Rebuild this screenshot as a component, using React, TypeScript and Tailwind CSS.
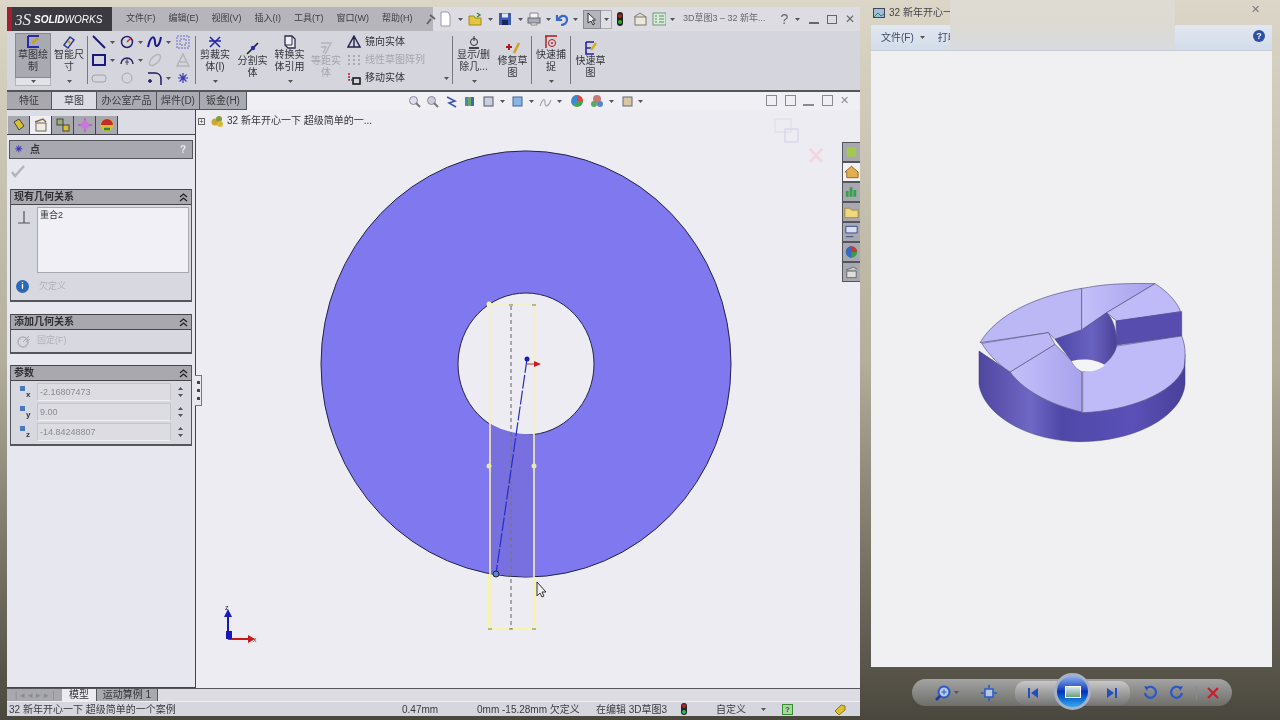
import type { ReactNode } from 'react';

const cjk = "font-['Liberation_Sans','Noto_Sans_CJK_SC',sans-serif]";

function Ico({ w = 16, h = 16, className = '', children }: { w?: number; h?: number; className?: string; children: ReactNode }) {
  return (
    <svg width={w} height={h} viewBox={`0 0 ${w} ${h}`} className={`shrink-0 ${className}`} fill="none">
      {children}
    </svg>
  );
}

function Caret({ className = '' }: { className?: string }) {
  return (
    <svg width="5" height="3" viewBox="0 0 5 3" className={`shrink-0 ${className}`}>
      <path d="M0 0h5L2.5 3z" fill="#555" />
    </svg>
  );
}

function Sep() {
  return <div className="w-px self-stretch my-[3px] bg-[#77777e] shrink-0" />;
}

function BigBtn({ w, label, icon, arrow, muted, pressed, low }: { w: number; label: ReactNode; icon: ReactNode; arrow?: boolean; muted?: boolean; pressed?: boolean; low?: boolean }) {
  return (
    <div
      style={{ width: w }}
      className={`relative shrink-0 flex flex-col items-center text-[10px] leading-[12px] text-center ${low ? 'pt-[7px]' : 'pt-[1px]'} ${muted ? 'text-[#a5a5ab]' : 'text-[#33333a]'}`}
    >
      {pressed && <div className="absolute inset-x-0 top-0 h-[45px] bg-[#a9a9b1] border border-[#8a8a92]" />}
      {pressed && <div className="absolute inset-x-0 top-[45px] bottom-[1px] bg-[#e2e2e8] border-x border-b border-[#b4b4ba]" />}
      <div className="relative h-[15px] flex items-center justify-center">{icon}</div>
      <div className="relative">{label}</div>
      {arrow && <Caret className="absolute bottom-[4px] left-1/2 -ml-[2px]" />}
    </div>
  );
}

function SmallTool({ children, arrow }: { children: ReactNode; arrow?: boolean }) {
  return (
    <div className="w-[28px] flex items-center gap-[3px]">
      {children}
      {arrow && <Caret />}
    </div>
  );
}

const sketchTools: { key: string; arrow?: boolean; icon: ReactNode }[] = [
  { key: 'line', arrow: true, icon: <path d="M2 2l12 12" stroke="#1a1a6e" strokeWidth="2" /> },
  { key: 'circle', arrow: true, icon: <g stroke="#22226e" strokeWidth="1.5"><circle cx="8" cy="8" r="5.5" /><path d="M8 8l4-4" stroke="#c03030" /></g> },
  { key: 'spline', arrow: true, icon: <path d="M1 13C4 0 8 2 8 8s4 6 6-5" stroke="#1a1a8e" strokeWidth="2" /> },
  { key: 'pattern', icon: <g stroke="#6a6ac8" strokeDasharray="2 1"><rect x="2" y="2" width="12" height="12" /><path d="M5 5h6v6H5z" /></g> },
  { key: 'rect', arrow: true, icon: <rect x="2" y="3" width="12" height="10" stroke="#1a1a7e" strokeWidth="2" /> },
  { key: 'arc', arrow: true, icon: <g stroke="#22226e" strokeWidth="1.5"><path d="M2 12a6 6 0 0 1 12 0" /><path d="M8 7v6M6 10h4" stroke="#444" strokeWidth="1" /></g> },
  { key: 'ellipse', icon: <ellipse cx="8" cy="8" rx="7" ry="3.5" transform="rotate(-45 8 8)" stroke="#b4b4ba" strokeWidth="1.4" /> },
  { key: 'text', icon: <path d="M8 2l6 12H2zM5 10h6" stroke="#b4b4ba" strokeWidth="1.5" /> },
  { key: 'slot', icon: <rect x="1" y="5" width="14" height="7" rx="3" stroke="#a2a2a8" /> },
  { key: 'clock', icon: <circle cx="8" cy="8" r="5" stroke="#a8a8ae" /> },
  { key: 'fillet', arrow: true, icon: <path d="M1 3h7c4 0 6 3 6 6v6M3 9v4M1 11h4" stroke="#1a1a5e" strokeWidth="1.5" /> },
  { key: 'point', icon: <path d="M8 3v10M3 8h10M4.5 4.5l7 7M11.5 4.5l-7 7" stroke="#3a3ab8" strokeWidth="1.2" /> },
];

function CommandBar() {
  return (
    <div className={`h-[61px] bg-[#d5d5dd] flex items-stretch pl-[8px] pb-[3px] pt-[2px] border-b-2 border-[#55555c]`}>
      <BigBtn
        w={36}
        pressed
        arrow
        label={<>草图绘<br />制</>}
        icon={<Ico><path d="M3 2h11M3 2v11h11" stroke="#2a2ab0" strokeWidth="2" /><path d="M7 9l6-5" stroke="#c9a020" strokeWidth="2.5" /></Ico>}
      />
      <BigBtn
        w={36}
        arrow
        label={<>智能尺<br />寸</>}
        icon={<Ico><path d="M3 11l6-8 4 3-6 8z" stroke="#2a3a90" strokeWidth="1.5" /><circle cx="8" cy="8" r="1.5" fill="#c9a020" /></Ico>}
      />
      <Sep />
      <div className="w-[107px] grid grid-cols-[repeat(4,28px)] grid-rows-3 pl-[3px] items-center shrink-0">
        {sketchTools.map((t) => (
          <SmallTool key={t.key} arrow={t.arrow}>
            <Ico>{t.icon}</Ico>
          </SmallTool>
        ))}
      </div>
      <Sep />
      <BigBtn w={38} arrow label={<>剪裁实<br />体(I)</>} icon={<Ico><path d="M3 3l10 10M13 3L3 13M2 7h12" stroke="#2222a8" strokeWidth="1.5" /></Ico>} />
      <BigBtn w={37} low label={<>分割实<br />体</>} icon={<Ico><path d="M2 14L13 3" stroke="#222" strokeWidth="1.6" /><circle cx="8" cy="8" r="2.2" fill="#2a2ab0" /></Ico>} />
      <BigBtn w={37} arrow label={<>转换实<br />体引用</>} icon={<Ico><path d="M3 2h7l3 3v9H6l-3-3z" stroke="#2a2a4a" strokeWidth="1.3" fill="#f0f0f4" /><path d="M10 2v9H3" stroke="#2a2a4a" /></Ico>} />
      <BigBtn w={36} low muted label={<>等距实<br />体</>} icon={<Ico><path d="M3 3h10L7 14M3 7h5L5 13" stroke="#b4b4ba" strokeWidth="1.5" /></Ico>} />
      <div className="w-[108px] pl-[3px] flex flex-col justify-between text-[10px] leading-[18px] text-[#33333a] shrink-0">
        <div className="flex items-center gap-[4px]">
          <Ico w={14} h={14}><path d="M7 1l6 11H1zM7 1v11" stroke="#22224a" strokeWidth="1.4" /></Ico>
          镜向实体
        </div>
        <div className="flex items-center gap-[4px] text-[#a5a5ab]">
          <Ico w={14} h={14}><path d="M1 3h2M6 3h2M11 3h2M1 7h2M6 7h2M11 7h2M1 11h2M6 11h2M11 11h2" stroke="#aaa" strokeWidth="2" /></Ico>
          线性草图阵列
        </div>
        <div className="flex items-center gap-[4px]">
          <Ico w={14} h={14}><rect x="6" y="7" width="7" height="6" stroke="#111" strokeWidth="1.5" /><path d="M2 2v7h3" stroke="#b02020" strokeWidth="1.5" strokeDasharray="2 1" /></Ico>
          移动实体
        </div>
      </div>
      <Caret className="self-end -ml-[8px] mb-[7px] mr-[3px]" />
      <Sep />
      <BigBtn w={41} arrow label={<>显示/删<br />除几...</>} icon={<Ico><circle cx="8" cy="8" r="3.5" stroke="#333" /><path d="M3 14h10" stroke="#111" strokeWidth="1.5" /><path d="M8 2v5" stroke="#333" /></Ico>} />
      <BigBtn w={37} low label={<>修复草<br />图</>} icon={<Ico><path d="M1 7h6M4 4v6" stroke="#b01818" strokeWidth="2" /><path d="M9 13l5-10" stroke="#d0a020" strokeWidth="2.5" /></Ico>} />
      <Sep />
      <BigBtn w={38} arrow label={<>快速捕<br />捉</>} icon={<Ico><path d="M2 2h12M3 2v12" stroke="#b01818" strokeWidth="1.4" /><circle cx="9" cy="9" r="3.5" stroke="#b01818" /><circle cx="9" cy="9" r="1" fill="#b01818" /></Ico>} />
      <Sep />
      <BigBtn w={39} low label={<>快速草<br />图</>} icon={<Ico><path d="M3 2h8M3 2v12h8M3 8h5" stroke="#2222b0" strokeWidth="1.6" /><path d="M8 10l5-7" stroke="#d0b020" strokeWidth="2.5" /></Ico>} />
    </div>
  );
}

const menus = ['文件(F)', '编辑(E)', '视图(V)', '插入(I)', '工具(T)', '窗口(W)', '帮助(H)'];

function TitleBar() {
  return (
    <div className="h-[24px] flex items-stretch bg-[#dcdce2] text-[10px] text-[#44444a]">
      <div className="w-[105px] bg-[#3a3a40] flex items-center border-l-[5px] border-[#a02030] shrink-0">
        <span className="pl-[3px] text-[#e8e8ee] italic font-['Liberation_Serif',serif] text-[17px] leading-none">
          <span className="text-[15px]">3</span>S
        </span>
        <span className="pl-[3px] text-white italic text-[10px] font-bold">
          SOLID<span className="font-normal">WORKS</span>
        </span>
      </div>
      <div className="w-[321px] bg-[#b5b5bb] flex items-center pl-[14px] gap-[13px] shrink-0">
        {menus.map((m) => (
          <span key={m} className="whitespace-nowrap text-[9px] text-[#3e3e44]">{m}</span>
        ))}
        <Ico w={10} h={12}><path d="M1 11l4-5M4 2l5 4" stroke="#666" strokeWidth="2" /></Ico>
      </div>
      <div className="flex-1 flex items-center pl-[6px] min-w-0">
        <Ico w={13} h={16}><path d="M2 1h7l2 3v11H2z" fill="#fff" stroke="#99a" /></Ico>
        <Caret className="ml-[6px] mr-[5px]" />
        <Ico w={14} h={14}><path d="M1 4h5l1 2h6v7H1z" fill="#e2c640" stroke="#a08a20" /><path d="M9 1l3 2-3 2" stroke="#2a9030" strokeWidth="1.4" /></Ico>
        <Caret className="ml-[6px] mr-[5px]" />
        <Ico w={14} h={14}><rect x="1" y="1" width="12" height="12" fill="#3c5cb4" /><rect x="4" y="1.500" width="6" height="4" fill="#e4e8f4" /><rect x="4" y="8" width="6" height="5" fill="#16265c" /></Ico>
        <Caret className="ml-[6px] mr-[4px]" />
        <Ico w={14} h={14}><path d="M3 6V1h8v5" fill="#f4f4f4" stroke="#888" /><rect x="1" y="6" width="12" height="5" fill="#a8acb4" stroke="#667" /><path d="M4 11h6v2H4z" fill="#f4f4f4" stroke="#888" /></Ico>
        <Caret className="ml-[5px] mr-[4px]" />
        <Ico w={14} h={14}><path d="M2 3v5h5M3 8c3-6 9-5 9 0 0 3-3 5-6 5" stroke="#3868c8" strokeWidth="2.2" /></Ico>
        <Caret className="ml-[4px] mr-[5px]" />
        <div className="h-[19px] w-[18px] bg-[#b4b4bc] border border-[#8a8a92] flex items-center justify-center">
          <Ico w={10} h={14}><path d="M1 1v10l3-2 2 4 1.500-1-2-4h3z" fill="#f0f0f4" stroke="#333" /></Ico>
        </div>
        <div className="h-[19px] w-[11px] bg-[#dedee4] border-y border-r border-[#aaaab0] flex items-center justify-center mr-[4px]"><Caret /></div>
        <Ico w={8} h={16}><rect x="1" y="1" width="6" height="14" rx="3" fill="#222" /><circle cx="4" cy="5" r="2" fill="#b82020" /><circle cx="4" cy="11" r="2" fill="#30b030" /></Ico>
        <Ico w={14} h={14} className="ml-[9px]"><rect x="2" y="5" width="11" height="8" fill="#ece8dc" stroke="#7a7668" /><path d="M1 5l6-4 6 4" stroke="#8a7a5a" /></Ico>
        <Ico w={14} h={14} className="ml-[5px]"><rect x="1" y="1" width="13" height="12" fill="#d6ecd8" stroke="#6a9a7a" /><path d="M3 4h2M3 7h2M3 10h2M7 4h5M7 7h5M7 10h5" stroke="#5a8a6a" /></Ico>
        <Caret className="ml-[4px]" />
        <span className="ml-[8px] whitespace-nowrap text-[9px] text-[#66666c]">3D草图3 – 32 新年...</span>
        <span className="ml-[15px] text-[14px] leading-none text-[#66666c]">?</span>
        <Caret className="ml-[7px]" />
        <div className="ml-[9px] w-[10px] h-[9px] border-b-2 border-[#66666c]" />
        <div className="ml-[8px] w-[10px] h-[9px] border border-[#66666c]" />
        <span className="ml-[8px] text-[12px] leading-none text-[#66666c]">✕</span>
      </div>
    </div>
  );
}

const docTabs = [
  { label: '特征', w: 45, fill: 'bg-[#a8a8ae]' },
  { label: '草图', w: 45, fill: 'bg-[#dcdce4]' },
  { label: '办公室产品', w: 60, fill: 'bg-[#aaaab2]' },
  { label: '焊件(D)', w: 43, fill: 'bg-[#aaaab2]' },
  { label: '钣金(H)', w: 47, fill: 'bg-[#aaaab2]' },
];

function HudIcon({ fill, stroke }: { fill: string; stroke: string }) {
  return <Ico w={13} h={13}><rect x="2" y="2" width="9" height="9" fill={fill} stroke={stroke} /></Ico>;
}

function TabsRow() {
  return (
    <div className="h-[18px] flex items-stretch bg-[#f0eff4] text-[10px] text-[#3a3a40]">
      {docTabs.map((t) => (
        <div key={t.label} style={{ width: t.w }} className={`${t.fill} shrink-0 flex items-center justify-center border-r border-b border-[#55555c]`}>
          {t.label}
        </div>
      ))}
      <div className="flex-1 flex items-center pl-[161px] relative">
        <Ico w={13} h={13} className="mr-[5px]"><circle cx="5.500" cy="5.500" r="4" stroke="#8a8a92" fill="#dde" /><path d="M8 8l4 4" stroke="#777" strokeWidth="2" /></Ico>
        <Ico w={13} h={13} className="mr-[6px]"><circle cx="5.500" cy="5.500" r="4" stroke="#8a8a92" fill="#ccd" /><path d="M8 8l4 4" stroke="#777" strokeWidth="2" /></Ico>
        <Ico w={13} h={13} className="mr-[5px]"><path d="M2 2l8 4-6 2 7 4" stroke="#3a5ab0" strokeWidth="1.6" /></Ico>
        <Ico w={13} h={13}><path d="M2 2h3v9H2z" fill="#4a8aa8" /><path d="M5 2h3v9H5z" fill="#6aa860" /><path d="M8 2h3v9H8z" fill="#3a6ab0" /></Ico>
        <div className="w-[6px]" />
        <HudIcon fill="#c8d0de" stroke="#556" />
        <Caret className="ml-[5px] mr-[6px]" />
        <HudIcon fill="#8ab4e8" stroke="#468" />
        <Caret className="ml-[5px] mr-[5px]" />
        <Ico w={13} h={13}><path d="M1 11c3-8 5-8 5-3s4 3 6-3" stroke="#a8a8b0" strokeWidth="1.2" /></Ico>
        <Caret className="ml-[5px] mr-[8px]" />
        <Ico w={14} h={14}><circle cx="7" cy="7" r="6" fill="#e8a838" /><path d="M7 7V1a6 6 0 0 1 6 6z" fill="#d84848" /><path d="M7 7h6a6 6 0 0 1-9 5z" fill="#3aa858" /><path d="M7 7L4 12a6 6 0 0 1 3-11z" fill="#3a88d8" /></Ico>
        <Ico w={14} h={14} className="ml-[6px]"><circle cx="7" cy="5" r="4" fill="#c87878" /><circle cx="4" cy="10" r="3" fill="#58a868" /><circle cx="10" cy="10" r="3" fill="#5888c8" /></Ico>
        <Caret className="ml-[5px] mr-[7px]" />
        <HudIcon fill="#d8c8a8" stroke="#667" />
        <Caret className="ml-[4px]" />
        <div className="absolute right-[9px] top-[3px] flex items-center gap-[7.5px]">
          <div className="w-[11px] h-[11px] border border-[#8a8a92]" />
          <div className="w-[11px] h-[11px] border border-[#8a8a92]" />
          <div className="w-[11px] h-[11px] border-b-2 border-[#8a8a92]" />
          <div className="w-[11px] h-[11px] border border-[#8a8a92]" />
          <span className="w-[11px] text-[11px] leading-[11px] text-[#8a8a92]">✕</span>
        </div>
      </div>
    </div>
  );
}

function SectionHead({ title }: { title: string }) {
  return (
    <div className="h-[16px] bg-[#a8a8ae] border-y border-[#44444a] flex items-center justify-between pl-[3px] pr-[3px] text-[10px] font-bold text-[#2e2e34] leading-none">
      {title}
      <Ico w={9} h={9}><path d="M1 4l3.500-3L8 4M1 8l3.500-3L8 8" stroke="#222" strokeWidth="1.300" /></Ico>
    </div>
  );
}

function Section({ title, className, children }: { title: string; className: string; children: ReactNode }) {
  return (
    <div className={`mx-[3px] border-x border-b-2 border-[#55555c] bg-[#d8d8e0] ${className}`}>
      <SectionHead title={title} />
      {children}
    </div>
  );
}

const params = [
  { axis: 'x', value: '-2.16807473' },
  { axis: 'y', value: '9.00' },
  { axis: 'z', value: '-14.84248807' },
];

const panelTabs = [
  <Ico key="a"><path d="M3 5l5-3 5 7-5 4z" fill="#d8c030" stroke="#444" /></Ico>,
  <Ico key="b"><rect x="3" y="6" width="10" height="8" fill="#f0ece0" stroke="#666" /><path d="M2 5l8-3 3 3" stroke="#8a6a3a" strokeWidth="1.5" /></Ico>,
  <Ico key="c"><rect x="2" y="2" width="6" height="6" fill="#9ab06a" stroke="#444" /><rect x="8" y="8" width="6" height="6" fill="#d8c030" stroke="#444" /></Ico>,
  <Ico key="d"><path d="M8 1v14M1 8h14" stroke="#c050d0" strokeWidth="1.4" /><circle cx="8" cy="8" r="4" fill="#c878d8" /></Ico>,
  <Ico key="e"><circle cx="8" cy="8" r="6.500" fill="#d8c030" /><path d="M2 8a6 6 0 0 1 12 0z" fill="#c82828" /><path d="M5 12h6" stroke="#2a8a3a" strokeWidth="2.5" /></Ico>,
];

function SidePanel() {
  return (
    <div className="w-[189px] shrink-0 bg-[#e7e7ef] border-r border-[#44444a] border-b border-b-[#44444a] relative z-10 text-[#33333a]">
      <div className="flex pl-[1px] pt-[6px] h-[25px] border-b border-[#44444a] bg-[#dcdce4]">
        {panelTabs.map((ico, i) => (
          <div key={i} className={`w-[22px] h-[18px] flex items-center justify-center border-r border-[#44444a] ${i === 1 ? 'bg-[#eeeef4]' : 'bg-[#a8a8b0]'}`}>
            {ico}
          </div>
        ))}
      </div>
      <div className="mx-[2px] mt-[5px] h-[19px] bg-[#a8a8b0] border border-[#55555c] flex items-center justify-between pl-[5px] pr-[6px] text-[10px] font-bold leading-none">
        <span className="flex items-center gap-[7px]">
          <span className="text-[#3a3ab0] text-[9px]">✳</span>点
        </span>
        <span className="text-[#e8e8ee]">?</span>
      </div>
      <div className="h-[30px] pl-[3px] pt-[4px]">
        <Ico><path d="M2 9l3 4 9-10" stroke="#b4b4bc" strokeWidth="2.5" /></Ico>
      </div>
      <Section title="现有几何关系" className="h-[113px]">
        <div className="flex h-[68px]">
          <div className="w-[26px] flex justify-center pt-[4px]">
            <Ico><path d="M8 2v12M2 14h12" stroke="#555" strokeWidth="1.2" /></Ico>
          </div>
          <div className="w-[152px] mt-[2px] h-[66px] bg-[#f0f0f6] border border-[#a8a8b0] px-[2px] text-[9px] leading-[14px]">重合2</div>
        </div>
        <div className="flex items-center h-[27px] pl-[5px] gap-[10px] text-[9px] text-[#b0b0b8]">
          <div className="w-[13px] h-[13px] rounded-full bg-[#2a68b8] text-white text-[9px] font-bold leading-[13px] text-center">i</div>
          欠定义
        </div>
      </Section>
      <Section title="添加几何关系" className="h-[40px] mt-[12px]">
        <div className="flex items-center h-[22px] pl-[6px] gap-[6px] text-[9px] text-[#b0b0b8]">
          <Ico w={14} h={14}><circle cx="6" cy="8" r="5" stroke="#b0b0b8" strokeWidth="1.5" /><path d="M6 8l6-6M9 8l4-3" stroke="#a8a8b0" /></Ico>
          固定(F)
        </div>
      </Section>
      <Section title="参数" className="h-[81px] mt-[11px]">
        <div className="flex flex-col gap-[2px] pt-[2px]">
          {params.map((p) => (
            <div key={p.axis} className="flex items-center h-[18px]">
              <div className="w-[26px] pl-[9px] relative h-full">
                <div className="w-[5px] h-[5px] bg-[#4a78c0] mt-[3px]" />
                <span className="absolute left-[15px] top-[7px] text-[8px] font-bold leading-[10px]">{p.axis}</span>
              </div>
              <div className="w-[134px] h-[18px] bg-[#dcdce2] border border-[#c4c4ca] border-b-[#f0f0f4] pl-[2px] text-[9px] leading-[16px] text-[#8a8a92]">{p.value}</div>
              <div className="w-[14px] ml-[1px] pl-[3px] flex flex-col gap-[4px] items-center">
                <Caret className="rotate-180" />
                <Caret />
              </div>
            </div>
          ))}
        </div>
      </Section>
      <div className="absolute left-[188px] top-[265px] w-[7px] h-[31px] bg-[#e9e9ef] border border-l-0 border-[#77777e] flex flex-col items-center justify-center gap-[5px]">
        <div className="w-[3px] h-[3px] bg-[#44444a]" />
        <div className="w-[3px] h-[3px] bg-[#44444a]" />
        <div className="w-[3px] h-[3px] bg-[#44444a]" />
      </div>
    </div>
  );
}

const taskIcons = [
  <rect key="a" x="4" y="4" width="10" height="10" fill="#a4c850" />,
  <path key="b" d="M2 9l7-6 7 6v6H4V9z" fill="#e0b050" stroke="#a06020" />,
  <path key="c" d="M3 14V8h3v6zm4 0V4h3v10zm4 0V7h3v7z" fill="#38a048" />,
  <path key="d" d="M2 5h5l2 2h7v8H2z" fill="#f0d880" stroke="#a08a40" />,
  <path key="e" d="M3 3h12v7H3zM3 14h8" stroke="#334488" fill="#dde" />,
  <g key="f"><circle cx="9" cy="9" r="6" fill="#38a048" /><path d="M3 9a6 6 0 0 1 12 0z" fill="#c83838" /><path d="M9 3a6 6 0 0 0 0 12z" fill="#3868c8" /></g>,
  <path key="g" d="M4 8h10v7H4zM3 7l8-3 4 2" stroke="#666" fill="#ddd" />,
];

function Drawing() {
  const ringPath =
    'M321 365a205 213 0 1 0 410 0a205 213 0 1 0 -410 0ZM458 365a68 71 0 1 1 136 0a68 71 0 1 1 -136 0Z';
  return (
    <svg className="absolute inset-0" width="664" height="575" viewBox="196 111 664 575">
      <path d={ringPath} fill="#7f78ef" fillRule="evenodd" stroke="#23234a" strokeWidth="1" />
      <path d="M490 425Q511 436 534 435.500V577.800Q511 577 490 574.700Z" fill="#7870de" />
      <path d="M490 305H534M490 305V630M534 305V630" stroke="#f3f2b8" strokeWidth="1.600" fill="none" />
      <path d="M489 575V630M535 578V630M489 630H535" stroke="#f5f4a8" strokeWidth="2.200" fill="none" />
      <path d="M511 307V630" stroke="#77777e" strokeWidth="1.200" strokeDasharray="4 3" />
      <path d="M527 360L496 575" stroke="#2a2acc" strokeWidth="1.200" strokeDasharray="14 2" />
      <path d="M527 365H534" stroke="#c83030" />
      <path d="M534 362l7 3-7 3z" fill="#d01818" />
      <circle cx="527" cy="360" r="2.500" fill="#1a1ab8" />
      <circle cx="496" cy="575" r="3" fill="#5a88d8" stroke="#223" />
      <circle cx="489" cy="305" r="2.500" fill="#f3f2c0" />
      <circle cx="489" cy="467" r="2.500" fill="#e8e8a8" />
      <circle cx="534" cy="467" r="2.500" fill="#e8e8a8" />
      <path d="M488 630h4M509 630h4M532 630h4M509 306h4M532 306h4" stroke="#777" />
      <path d="M537 583v14l3-3 2 4 2-1-2-4h4z" fill="#eeeef4" stroke="#333" />
      <path d="M228 640V616" stroke="#1818b8" strokeWidth="2" />
      <path d="M224 618l4-8 4 8z" fill="#1818c8" />
      <path d="M228 640h22" stroke="#c81818" strokeWidth="2" />
      <path d="M248 636l7 4-7 4z" fill="#c81818" />
      <path d="M226 632h6v8h-6z" fill="#1818b8" />
      <text x="225" y="611" fontSize="7" fill="#223">z</text>
      <text x="253" y="643" fontSize="7" fill="#a03030">x</text>
      <g stroke="#e3e0ea" strokeWidth="1.500" fill="none">
        <rect x="775" y="120" width="16" height="13" />
        <rect x="785" y="130" width="13" height="13" stroke="#dcd6ee" />
      </g>
      <path d="M810 150l12 13M822 150l-12 13" stroke="#f0d8de" strokeWidth="3" />
    </svg>
  );
}

function Viewport() {
  return (
    <div className="relative flex-1 bg-[#edecf2] overflow-hidden">
      <Drawing />
      <div className="absolute left-[2px] top-[4px] flex items-center text-[10px] leading-[14px] text-[#33333a]">
        <span className="w-[7px] h-[7px] border border-[#666] mr-[5px] flex items-center justify-center text-[7px] leading-none">+</span>
        <Ico w={14} h={14} className="mr-[3px]"><circle cx="5" cy="8" r="3.500" fill="#c8a830" /><circle cx="9" cy="5" r="3" fill="#889a40" /><circle cx="10" cy="10" r="3" fill="#d8b838" /></Ico>
        32 新年开心一下 超级简单的一...
      </div>
      <div className="absolute right-0 top-[32px] w-[18px] flex flex-col">
        {taskIcons.map((ico, i) => (
          <div key={i} className={`h-[20px] flex items-center justify-center border-y border-l border-[#55555c] ${i === 1 ? 'bg-[#f2f2f6]' : 'bg-[#a8a8b0]'}`}>
            <svg width="18" height="18" viewBox="0 0 18 18">{ico}</svg>
          </div>
        ))}
      </div>
    </div>
  );
}

function BottomBars() {
  return (
    <>
      <div className="h-[13px] flex items-stretch bg-[#dcdce2] text-[10px] text-[#33333a] leading-[12px] border-t border-[#55555c]">
        <div className="w-[55px] bg-[#a8a8ae] text-[#8a8a90] text-[9px] tracking-[3px] pl-[8px] overflow-hidden">|◂◂▸▸|</div>
        <div className="w-[35px] text-center bg-[#ecebf0] border-r border-[#55555c]">模型</div>
        <div className="w-[61px] text-center bg-[#a8a8ae] border-r border-[#55555c]">运动算例 1</div>
      </div>
      <div className="h-[15px] bg-[#d6d6de] border-t border-[#f0f0f4] flex items-center text-[10px] text-[#3a3a40] relative whitespace-nowrap pl-[2px]">
        <span className="w-[393px]">32 新年开心一下 超级简单的一个案例</span>
        <span className="w-[75px]">0.47mm</span>
        <span className="w-[119px]">0mm -15.28mm 欠定义</span>
        <span className="w-[84px]">在编辑 3D草图3</span>
        <Ico w={8} h={12} className="mr-[28px]"><rect x="1" y="0" width="6" height="12" rx="3" fill="#223" /><circle cx="4" cy="3" r="2" fill="#c02020" /><circle cx="4" cy="9" r="2" fill="#30c040" /></Ico>
        <span className="w-[45px]">自定义</span>
        <Caret className="mr-[16px]" />
        <div className="w-[11px] h-[11px] bg-[#a8d8a0] border border-[#3a8a3a] text-[8px] leading-[9px] text-center text-[#1a6a2a] font-bold">?</div>
        <Ico w={13} h={13} className="ml-[40px]"><path d="M2 8l6-6 4 1v4l-6 5z" fill="#dcc030" stroke="#8a7a20" /></Ico>
      </div>
    </>
  );
}

function Model() {
  return (
    <svg width="240" height="180" viewBox="0 0 720 540" className="shrink-0">
      <defs>
        <linearGradient id="side" x1="0" x2="1" y1="0" y2="0">
          <stop offset="0" stopColor="#4f46a0" />
          <stop offset="0.25" stopColor="#6f68c4" />
          <stop offset="0.4" stopColor="#5048a8" />
          <stop offset="0.75" stopColor="#5a50b8" />
          <stop offset="1" stopColor="#484098" />
        </linearGradient>
        <linearGradient id="wall" x1="0" x2="1" y1="0" y2="0">
          <stop offset="0" stopColor="#4e46a4" />
          <stop offset="0.6" stopColor="#6a62c0" />
          <stop offset="1" stopColor="#4a4298" />
        </linearGradient>
        <linearGradient id="top" x1="0" x2="1" y1="0" y2="0">
          <stop offset="0" stopColor="#c4c0fa" />
          <stop offset="1" stopColor="#a8a2ec" />
        </linearGradient>
      </defs>
      <path d="M57 240V340C70 430 200 510 360 512C520 512 665 440 675 340V250L368 425L150 303Z" fill="url(#side)" stroke="#3a3680" strokeWidth="1.500" />
      <g stroke="#55527e" strokeWidth="2" strokeLinejoin="round">
        <path d="M60 215C110 130 230 75 365 52V176L285 205L265 185Z" fill="#bcb8f6" />
        <path d="M365 52C400 48 430 35 585 38L440 125L365 176Z" fill="url(#top)" />
        <path d="M585 38C620 60 650 90 662 122L470 150L440 125Z" fill="#bfbbf8" />
        <path d="M468 150L665 122V195L470 222Z" fill="#574daf" stroke="#4a4498" />
        <path d="M285 205L365 178L440 125C465 150 470 190 470 225C465 265 430 285 410 290L335 270Z" fill="url(#wall)" stroke="#4a4498" />
        <path d="M368 302C420 300 460 265 470 225L665 195C680 230 675 270 672 290C640 370 500 420 368 425Z" fill="#bfbbf9" />
        <path d="M150 303L285 220L335 270C345 290 360 300 365 302V423C290 405 200 370 150 303Z" fill="url(#top)" />
        <path d="M65 217L265 185L285 220L150 303C115 280 85 250 65 217Z" fill="#bcb8f6" />
      </g>
      <path d="M335 270C370 262 410 265 435 283C415 300 385 305 368 300C352 296 340 282 335 270Z" fill="#f4f4f6" />
    </svg>
  );
}

function Dock() {
  return (
    <div className="h-[53px] pt-[12px] pl-[41px]">
      <div className="w-[320px] h-[27px] rounded-[14px] bg-gradient-to-b from-[#a4a4a4] to-[#6e6e6a] flex items-center relative">
        <Ico w={16} h={16} className="ml-[23px]"><circle cx="9" cy="7" r="5.500" stroke="#2a58c8" strokeWidth="2" fill="#b8c8e0" /><path d="M5 11l-4 4" stroke="#1a3a98" strokeWidth="2.500" /><path d="M6.500 7h5M9 4.500v5" stroke="#2a58c8" /></Ico>
        <Caret className="ml-[3px]" />
        <Ico w={16} h={16} className="ml-[22px]"><rect x="4" y="4" width="8" height="8" stroke="#2a58c8" strokeWidth="1.500" fill="#b8c8e0" /><path d="M8 0v3M8 13v3M0 8h3M13 8h3" stroke="#2a58c8" strokeWidth="1.500" /></Ico>
        <div className="ml-[18px] w-[115px] h-[24px] rounded-[10px] bg-gradient-to-b from-[#c8c8c8] to-[#777] flex items-center justify-between px-[12px]">
          <Ico w={12} h={12}><path d="M1 1h2v10H1zM11 1v10L4 6z" fill="#1f4fc0" /></Ico>
          <Ico w={12} h={12}><path d="M11 1H9v10h2zM1 1v10l7-5z" fill="#1f4fc0" /></Ico>
        </div>
        <Ico w={16} h={16} className="ml-[12px]"><path d="M5 3a5.500 5.500 0 1 1-2 5" stroke="#2a58c8" strokeWidth="2.200" /><path d="M2 1l4 1-1 4z" fill="#1f4fc0" /></Ico>
        <Ico w={16} h={16} className="ml-[11px]"><path d="M11 3a5.500 5.500 0 1 0 2 5" stroke="#2a58c8" strokeWidth="2.200" /><path d="M14 1l-4 1 1 4z" fill="#1f4fc0" /></Ico>
        <div className="ml-[11px] w-px h-[14px] bg-[#8a8a8a]" />
        <Ico w={14} h={14} className="ml-[9px]"><path d="M2 2l10 10M12 2L2 12" stroke="#c81e30" strokeWidth="2.200" /></Ico>
        {/* big play button over the pill */}
        <div className="absolute left-[142px] top-[-6px] w-[37px] h-[37px] rounded-full border-[3px] border-[#a8b0c4] bg-gradient-to-b from-[#8fb0ec] via-[#0d30b8] to-[#38a8f0] flex items-center justify-center">
          <div className="w-[16px] h-[12px] bg-gradient-to-b from-[#dce8f0] to-[#6aa080] border border-white" />
        </div>
      </div>
    </div>
  );
}

function ViewerWindow() {
  return (
    <div className="w-[401px] ml-[11px] flex flex-col shrink-0 relative">
      <div className="h-[25px] flex items-center text-[10px] text-[#44444a] pl-[2px]">
        <Ico w={12} h={12} className="mr-[4px]"><rect x="0.500" y="1.500" width="11" height="9" fill="#9ac0e0" stroke="#445" /><path d="M1 10l4-4 3 3 3-2" stroke="#3a7a58" /></Ico>
        32 新年开心一
        <span className="absolute left-[380px] top-[4px] text-[11px] leading-none text-[#77777e]">✕</span>
      </div>
      <div className="h-[25px] bg-gradient-to-b from-[#e2e8f0] to-[#d2dcea] flex items-center text-[10px] text-[#3e4c64] pl-[10px] relative">
        文件(F)
        <Caret className="ml-[6px] mr-[13px]" />
        <span className="whitespace-nowrap">打印</span>
        <div className="absolute right-[7px] top-[5px] w-[12px] h-[12px] rounded-full bg-[#2c50a8] text-[9px] text-white font-bold leading-[12px] text-center">?</div>
      </div>
      {/* smeared strip the video leaves over the title and the toolbar */}
      <div className="absolute left-[79px] top-0 w-[225px] h-[50px] bg-gradient-to-b from-[#dedbd2] via-[#dcdad2] to-[#d8dae0]" />
      <div className="flex-1 bg-[#f0f0f2] border-t border-[#c8ccd4] pl-[89px] pt-[220px]">
        <Model />
      </div>
      <Dock />
    </div>
  );
}

export default function App() {
  return (
    <div className={`w-[1280px] h-[720px] overflow-hidden flex bg-gradient-to-b from-[#dcd6c8] via-[#b4ae9c] to-[#4a473e] ${cjk} blur-[0.4px]`}>
      <div className="w-[860px] shrink-0 pl-[7px] pt-[7px] pb-[4px] flex flex-col">
        <TitleBar />
        <CommandBar />
        <TabsRow />
        <div className="flex-1 flex min-h-0 relative">
          <SidePanel />
          <Viewport />
        </div>
        <BottomBars />
      </div>
      <ViewerWindow />
    </div>
  );
}
